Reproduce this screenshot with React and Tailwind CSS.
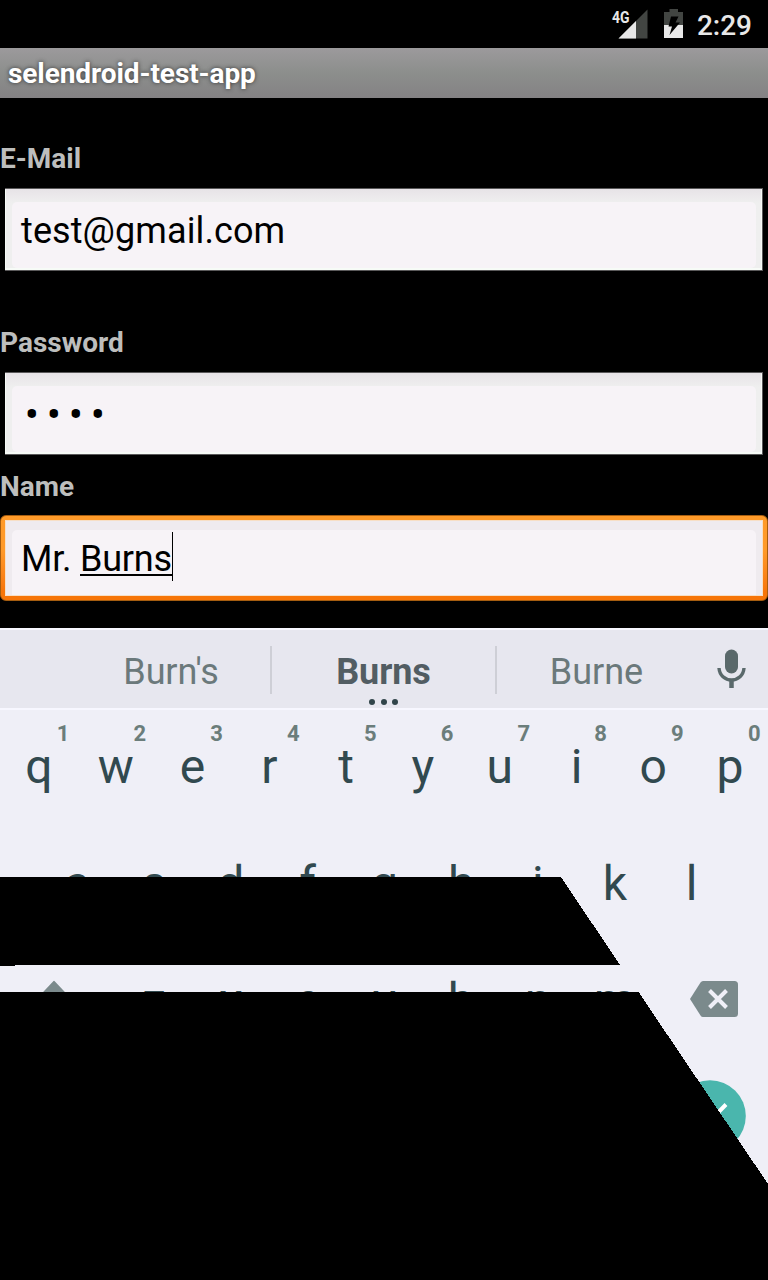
import React from "react";

const hintedKeys = [
  ["q", "1"], ["w", "2"], ["e", "3"], ["r", "4"], ["t", "5"],
  ["y", "6"], ["u", "7"], ["i", "8"], ["o", "9"], ["p", "0"],
];
const homeKeys = ["a", "s", "d", "f", "g", "h", "j", "k", "l"];
const bottomKeys = ["z", "x", "c", "v", "b", "n", "m"];

function StatusBar() {
  return (
    <header className="flex h-12 items-center justify-end bg-black pr-4 text-[#e8e8e8]">
      <svg className="h-12 w-[40px]" viewBox="610 0 40 48" role="img" aria-label="4G signal">
        <path d="M618.5 38.5H647.5V9.5Z" fill="#424542" />
        <path d="M618.5 38.5H636V21Z" fill="#e8e8e8" />
        <text x="612" y="22.5" fontFamily="Roboto" fontSize="16.5" fontWeight="700" textLength="17.5" lengthAdjust="spacingAndGlyphs" fill="#e8e8e8">4G</text>
      </svg>
      <svg className="ml-[14px] h-12 w-[19px]" viewBox="664 0 19 48" aria-label="Battery charging">
        <path d="M669.5 9H678V12H683V38H664V12H669.5Z" fill="#424542" />
        <path d="M664 25H683V38H664Z" fill="#e8e8e8" />
        <path d="M671 16.5H678.5L675.5 22.5H680L669.5 35L672 26.5H668.5Z" fill="#000" />
      </svg>
      <span className="ml-[14px] pt-[3px] text-[28px] leading-[50px] font-medium">2:29</span>
    </header>
  );
}

function Label({ children }) {
  return <label className="block h-[30px] text-[28px] leading-[32px] font-bold text-[#bdbebd]">{children}</label>;
}

function Field({ children }) {
  return (
    <div className="mx-[5px] h-[83px] border-y border-r border-[#5a595a] bg-linear-to-b from-[#e7e3e7] to-[#efefef] to-[14px]">
      <div className="h-full border border-b-2 border-[#f7fbf7] border-t-[#e7e3e7] pl-[6px] pr-[5px] pt-[12px]">
        <div className="h-full rounded-[5px] bg-[#f7f3f7] pl-[9px] text-[36px] leading-[59px] tracking-[0.1px] text-black">{children}</div>
      </div>
    </div>
  );
}

function Suggestions() {
  return (
    <div className="flex h-[82px] items-start border-y-2 border-[#f7f7ff] bg-[#e7e7ef] text-[36px] leading-[48px] text-[#6b797b]">
      <div className="w-[270px] pt-[18px] pl-[72px] text-center tracking-[-0.1px]">Burn's</div>
      <div className="mt-4 h-12 w-[2px] bg-[#cecfd6]" />
      <div className="relative w-[223px] pt-[18px] text-center font-bold tracking-[-0.1px] text-[#525d63]">
        Burns
        <div className="absolute top-[69px] left-[97px] flex gap-[5.500px]">
          <i className="size-[6px] rounded-full bg-[#31454a]" />
          <i className="size-[6px] rounded-full bg-[#31454a]" />
          <i className="size-[6px] rounded-full bg-[#31454a]" />
        </div>
      </div>
      <div className="mt-4 h-12 w-[2px] bg-[#cecfd6]" />
      <div className="w-[199px] pt-[18px] text-center">Burne</div>
      <svg className="mt-[18px] ml-[20px] h-[42px] w-[32px]" viewBox="716 648 32 42" aria-label="Voice input">
        <rect x="725" y="649.5" width="13" height="24" rx="6.5" fill="#5a696b" />
        <path d="M719 668C719.5 675.5 725 680 731.500 680S743.500 675.500 744 668" fill="none" stroke="#5a696b" strokeWidth="3.4" />
        <path d="M731.5 680V688" stroke="#5a696b" strokeWidth="4.5" />
      </svg>
    </div>
  );
}

function Keyboard() {
  return (
    <section className="relative h-[652px] overflow-hidden bg-[#efeff7] text-[48px] text-[#31494f]">
      <Suggestions />
      <div className="-mt-[2px] grid h-[117px] grid-cols-10 text-center leading-[117px]">
        {hintedKeys.map(([key, hint]) => (
          <div key={key} className="relative pl-[1px]">
            {key}
            <sup className="absolute top-[14px] right-[7.500px] text-[22px] leading-[24px] font-bold text-[#6b7d7b]">{hint}</sup>
          </div>
        ))}
      </div>
      <div className="grid h-[117px] grid-cols-9 px-[38.4px] text-center leading-[117px]">
        {homeKeys.map((key) => <div key={key} className="pl-[1px]">{key}</div>)}
      </div>
      <div className="flex h-[117px] items-center">
        <svg className="h-[38px] w-[115.2px] shrink-0 -translate-y-[1.5px]" viewBox="0 0 115.2 38" aria-label="Shift">
          <path d="M54 0L72 19H62V37H46V19H36Z" fill="#7b8a8c" />
        </svg>
        <div className="grid w-[537.6px] grid-cols-7 text-center leading-[117px]">
          {bottomKeys.map((key) => <div key={key} className="pl-[1px]">{key}</div>)}
        </div>
        <svg className="ml-[37.200px] h-[38px] w-[48px] -translate-y-[2px]" viewBox="690 980 48 38" aria-label="Delete">
          <path d="M703 981H734.500Q738 981 738 984.500V1013.500Q738 1017 734.500 1017H703Q701.500 1017 700.500 1015.500L690 999L700.500 982.500Q701.500 981 703 981Z" fill="#7b8a8c" />
          <path d="M709.500 990.500L726.500 1007.500M726.500 990.500L709.500 1007.500" stroke="#efeff7" strokeWidth="4" />
        </svg>
      </div>
      <div className="flex h-[117px] items-center justify-end pr-[22px]">
        <svg className="size-[72px] -translate-y-[2px]" viewBox="674 1080 72 72" aria-label="Done">
          <circle cx="710" cy="1116" r="35.800" fill="#4ab6ad" />
          <path d="M696 1117L705 1126L726 1104.500" fill="none" stroke="#fff" strokeWidth="4" />
        </svg>
      </div>
      <svg className="absolute inset-0 h-[652px] w-full" viewBox="0 628 768 652" shapeRendering="crispEdges" aria-hidden="true">
        <path d="M0 877H561L620 965H15V966H0Z" />
        <path d="M0 992H638.500L768 1184V1280H0Z" />
      </svg>
    </section>
  );
}

export default function App() {
  return (
    <main className="h-[1280px] w-[768px] overflow-hidden bg-black font-[Roboto,sans-serif]">
      <StatusBar />
      <h1 className="h-[50px] bg-linear-to-b from-[#9c9a9c] via-[#8c8e8c] to-[#848284] pl-2 text-[28px] leading-[52px] font-bold tracking-[-0.08px] text-white [text-shadow:0_0_4px_#333]">selendroid-test-app</h1>
      <form className="h-[530px] pt-[45px]">
        <Label>E-Mail</Label>
        <div className="mt-[15px]"><Field>test@gmail.com</Field></div>
        <div className="mt-[56px]"><Label>Password</Label></div>
        <div className="mt-[15px]">
          <Field>
            <div className="flex text-[42px] leading-[57px]">
              {[0, 1, 2, 3].map((n) => <span key={n} className="w-[22px] text-center">•</span>)}
            </div>
          </Field>
        </div>
        <div className="mt-[16px]"><Label>Name</Label></div>
        <div className="mt-[14px] h-[86px] rounded-[6px] border border-[#a55d10] bg-linear-to-b from-[#ff9a29] from-40% to-[#f77508] to-90% px-[4px] py-[4px]">
          <div className="h-full border border-[#f7dfc6] bg-[#efebef] px-[6px] pt-[9px]">
            <div className="flex h-full rounded-t-[5px] bg-[#f7f3f7] pl-[9px] text-[36px] leading-[59px] tracking-[-0.22px] text-black">
              <span className="whitespace-pre">Mr. </span>
              <span className="relative">Burns<i className="absolute top-[44px] left-0 h-[2px] w-full bg-black" /></span>
              <i className="mt-[2px] h-[49px] w-px bg-black" />
            </div>
          </div>
        </div>
      </form>
      <Keyboard />
    </main>
  );
}
